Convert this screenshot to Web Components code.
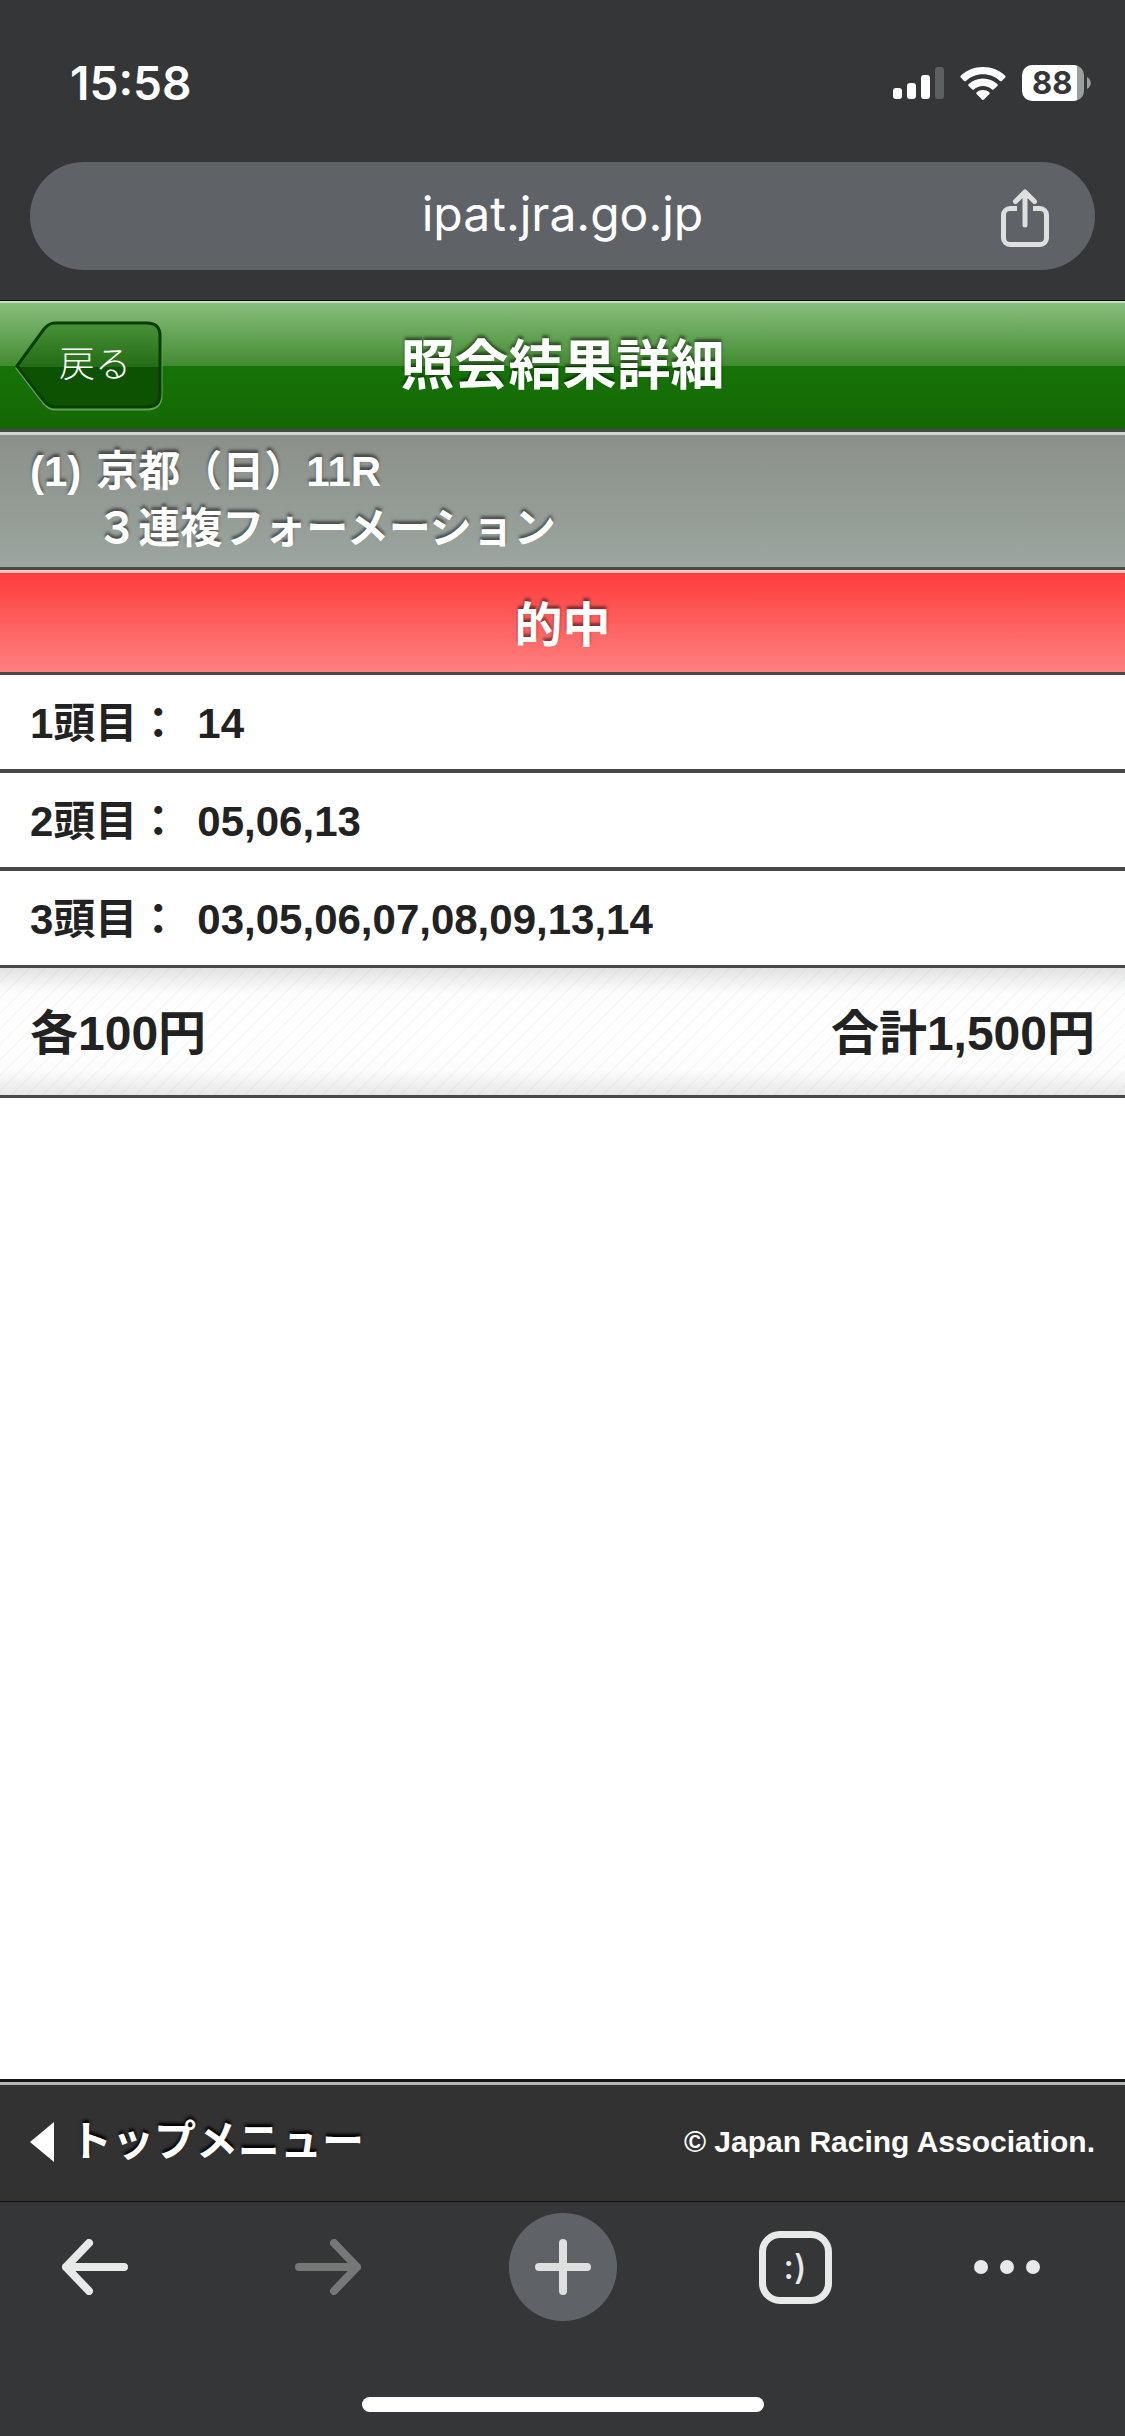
<!DOCTYPE html>
<html lang="ja">
<head>
<meta charset="utf-8">
<meta name="viewport" content="width=device-width, initial-scale=1">
<title>照会結果詳細</title>
<style>
    html, body { margin: 0; padding: 0; }
    body {
        display: flex; flex-direction: column; min-height: 100vh;
        background: #fff; color: #222;
        font-family: 'Liberation Sans', 'Noto Sans CJK JP', sans-serif;
        --chrome: #353638;
        --chrome-field: #5f6368;
        --chrome-icon: #e8eaea;
        --ui: 'Inter', sans-serif;
        --line: #484848;
        --shadow: 0 -3px 3px rgba(0, 0, 0, 0.5);
    }
    main { flex: 1; }
</style>
</head>
<body>
<status-bar time="15:58" battery="88"></status-bar>
<address-bar>ipat.jra.go.jp</address-bar>

<page-header back="戻る">照会結果詳細</page-header>
<main>
    <bet-title>
        <span slot="no">(1)</span>
        <span slot="race">京都（日）11R</span>
        <span slot="type">３連複フォーメーション</span>
    </bet-title>
    <bet-result>的中</bet-result>
    <horse-list></horse-list>
    <bet-total>
        <span slot="unit">各100円</span>
        <span slot="sum">合計1,500円</span>
    </bet-total>
</main>
<page-footer>
    <span slot="menu">トップメニュー</span>
    <span slot="copy">© Japan Racing Association.</span>
</page-footer>

<browser-toolbar></browser-toolbar>

<script>
class StatusBar extends HTMLElement {
    constructor() {
        super();
        this.attachShadow({ mode: 'open' });
    }

    connectedCallback() {
        this.shadowRoot.innerHTML = `
        <style>
            :host {
                display: flex; align-items: center; justify-content: space-between;
                padding: 53px 34px 49px 70px; background: var(--chrome); color: #fff;
                font-family: var(--ui); font-weight: 600;
            }
            .time { font-size: 46px; line-height: 60px; }
            .icons { display: flex; align-items: center; gap: 16px; }
            svg { display: block; }
            .battery { display: flex; align-items: center; gap: 3px; }
            .cell {
                width: 62px; height: 36px; border-radius: 10px;
                font-size: 31px; line-height: 36px; font-weight: 700; color: #353638;
                text-indent: 10px;
                background: linear-gradient(90deg, #fff 55px, #9a9f9e 55px);
            }
        </style>
        <span class="time">${this.getAttribute('time')}</span>
        <div class="icons">
            <svg width="51" height="32" viewBox="0 0 51 32" fill="#fff">
                <rect x="0" y="21" width="9" height="11" rx="3"/>
                <rect x="14" y="16" width="9" height="16" rx="3"/>
                <rect x="28" y="8" width="9" height="24" rx="3"/>
                <rect x="42" y="0" width="9" height="32" rx="3" fill="#5c6060"/>
            </svg>
            <svg width="46" height="33" viewBox="0 0 46 33" fill="#fff">
                <path d="M23 0C14.4 0 6.600 3.300.8 8.700c-.6.500-.6 1.400 0 1.900l3.300 3.300c.5.500 1.300.5 1.900 0C10.500 9.800 16.500 7.300 23 7.300s12.500 2.500 17 6.600c.6.500 1.400.5 1.900 0l3.300-3.300c.6-.5.600-1.400 0-1.900C39.400 3.300 31.600 0 23 0z"/>
                <path d="M23 11.500c-5.500 0-10.500 2.100-14.300 5.500-.6.500-.6 1.300-.1 1.900l3.500 3.400c.5.500 1.300.5 1.800.1 2.400-2.200 5.600-3.500 9.100-3.500s6.700 1.300 9.100 3.500c.5.400 1.300.4 1.800-.1l3.500-3.400c.5-.6.5-1.400-.1-1.900-3.800-3.400-8.800-5.500-14.300-5.500z"/>
                <path d="M23 23c-2.400 0-4.600.9-6.300 2.300-.6.500-.6 1.200-.1 1.700l5.400 5.500c.6.600 1.400.6 2 0l5.400-5.500c.5-.5.500-1.200-.1-1.700C27.600 23.900 25.400 23 23 23z"/>
            </svg>
            <div class="battery">
                <div class="cell">${this.getAttribute('battery')}</div>
                <svg width="4" height="12" viewBox="0 0 4 12"><path d="M0 0C5 3 5 9 0 12z" fill="#9a9f9e"/></svg>
            </div>
        </div>`;
    }
}
customElements.define('status-bar', StatusBar);

class AddressBar extends HTMLElement {
    constructor() {
        super();
        this.attachShadow({ mode: 'open' });
        this.shadowRoot.innerHTML = `
        <style>
            :host { display: block; padding: 0 30px 30px; background: var(--chrome); font-family: var(--ui); }
            .pill {
                display: grid; grid-template-columns: 1fr auto 1fr; align-items: center;
                min-height: 108px; border-radius: 54px; background: var(--chrome-field);
            }
            .url {
                grid-column: 2; border: none; padding: 0 0 4px; background: none; color: #fff;
                font: 400 48px/60px var(--ui);
            }
            .share { justify-self: end; margin-right: 46px; padding: 4px 0 0; border: none; background: none; }
            svg { display: block; }
        </style>
        <div class="pill">
            <button class="url"><slot></slot></button>
            <button class="share" aria-label="共有">
                <svg width="48" height="58" viewBox="0 0 48 58" fill="none" stroke="#dedfdf" stroke-width="5" stroke-linejoin="round">
                    <path d="M16 19.500H9A6.500 6.500 0 0 0 2.500 26v23A6.500 6.500 0 0 0 9 55.500h30a6.500 6.500 0 0 0 6.500-6.500V26a6.500 6.500 0 0 0-6.500-6.500h-7"/>
                    <path d="M24 36V3M14.500 12.500 24 3l9.500 9.500" stroke-linecap="round"/>
                </svg>
            </button>
        </div>`;
    }
}
customElements.define('address-bar', AddressBar);

class PageHeader extends HTMLElement {
    constructor() {
        super();
        this.attachShadow({ mode: 'open' });
    }

    connectedCallback() {
        this.shadowRoot.innerHTML = `
        <style>
            :host {
                display: grid; grid-template-columns: 1fr auto 1fr; align-items: center;
                min-height: 126px; padding: 2px 15px 0;
                border-top: 1px solid #111; border-bottom: 3px solid var(--line);
                box-shadow: inset 0 2px #c4dfbc;
                background: linear-gradient(#8cc07f, #418a30 51%, #167307 51%, #156805);
            }
            h1 {
                margin: 0; font-size: 54px; line-height: 66px; font-weight: 700; color: #fff;
                text-shadow: var(--shadow);
            }
            a {
                position: relative; justify-self: start; width: 148px; height: 90px;
                color: #fff; text-decoration: none; font-weight: 300;
                font-size: 36px; line-height: 88px; text-align: center;
            }
            a svg { position: absolute; left: 0; top: 0; }
            a span { position: relative; padding-left: 12px; }
        </style>
        <a href="#back">
            <svg width="148" height="90" viewBox="0 0 148 90">
                <defs>
                    <linearGradient id="g" x1="0" y1="0" x2="0" y2="1">
                        <stop offset="0" stop-color="#499238"/>
                        <stop offset=".52" stop-color="#246c15"/>
                        <stop offset=".52" stop-color="#0d5202"/>
                        <stop offset="1" stop-color="#0d5202"/>
                    </linearGradient>
                </defs>
                <path d="M2 47 29 9Q34 3 40 3H132Q146 3 146 17V74Q146 88 132 88H40Q34 88 29 82Z" fill="none" stroke="#62a552" stroke-width="3"/>
                <path d="M2 45 29 8Q34 2 40 2H132Q145 2 145 15V73Q145 86 132 86H40Q34 86 29 80Z" fill="url(#g)" stroke="#063f00" stroke-width="3"/>
            </svg>
            <span>${this.getAttribute('back')}</span>
        </a>
        <h1><slot></slot></h1>`;
    }
}
customElements.define('page-header', PageHeader);

class BetTitle extends HTMLElement {
    constructor() {
        super();
        this.attachShadow({ mode: 'open' });
        this.shadowRoot.innerHTML = `
        <style>
            :host {
                display: grid; grid-template-columns: auto 1fr; column-gap: 15px;
                padding: 11px 30px 10px;
                border-bottom: 3px solid var(--line); box-shadow: inset 0 3px #cfd3d1;
                background: linear-gradient(#8a8f89, #9ca59f);
                color: #fff; font-size: 42px; line-height: 57px; font-weight: 700;
                text-shadow: var(--shadow);
            }
            .type { grid-column: 2; }
        </style>
        <div><slot name="no"></slot></div>
        <div><slot name="race"></slot></div>
        <div class="type"><slot name="type"></slot></div>`;
    }
}
customElements.define('bet-title', BetTitle);

class BetResult extends HTMLElement {
    constructor() {
        super();
        this.attachShadow({ mode: 'open' });
        this.shadowRoot.innerHTML = `
        <style>
            :host {
                display: block; padding: 26px 30px 16px; text-align: center;
                border-bottom: 3px solid var(--line); box-shadow: inset 0 3px #ffc4c4;
                background: linear-gradient(#ff3a3a, #ff8080);
                color: #fff; font-size: 48px; line-height: 60px; font-weight: 700;
                text-shadow: var(--shadow);
            }
        </style>
        <slot></slot>`;
    }
}
customElements.define('bet-result', BetResult);

class HorseList extends HTMLElement {
    constructor() {
        super();
        this.attachShadow({ mode: 'open' });
        this.dados = [
            { label: "1頭目：", nums: ["14"] },
            { label: "2頭目：", nums: ["05", "06", "13"] },
            { label: "3頭目：", nums: ["03", "05", "06", "07", "08", "09", "13", "14"] }
        ];
    }

    connectedCallback() { this.render(); }

    render() {
        this.shadowRoot.innerHTML = `
        <style>
            :host { display: block; font-size: 42px; line-height: 60px; font-weight: 700; }
            dl { margin: 0; }
            .row {
                display: flex; gap: 18px; padding: 19px 30px 15px;
                border-bottom: 4px solid var(--line);
            }
            .row:last-child { border-bottom-width: 3px; }
            dd { margin: 0; }
        </style>
        <dl>
            ${this.dados.map(item => `
                <div class="row"><dt>${item.label}</dt><dd>${item.nums.join(',')}</dd></div>
            `).join('')}
        </dl>`;
    }
}
customElements.define('horse-list', HorseList);

class BetTotal extends HTMLElement {
    constructor() {
        super();
        this.attachShadow({ mode: 'open' });
        this.shadowRoot.innerHTML = `
        <style>
            :host {
                display: flex; justify-content: space-between; padding: 36px 30px 31px;
                border-bottom: 3px solid var(--line);
                font-size: 48px; line-height: 60px; font-weight: 700;
                background:
                    repeating-linear-gradient(135deg, transparent 0 9px, rgba(0, 0, 0, 0.04) 10px, transparent 11px),
                    linear-gradient(#e2e4e3, #fdfdfd 20%, #fff 50%, #fdfdfd 80%, #e6e7e6);
            }
        </style>
        <slot name="unit"></slot>
        <slot name="sum"></slot>`;
    }
}
customElements.define('bet-total', BetTotal);

class PageFooter extends HTMLElement {
    constructor() {
        super();
        this.attachShadow({ mode: 'open' });
        this.shadowRoot.innerHTML = `
        <style>
            :host {
                display: flex; align-items: center; justify-content: space-between;
                min-height: 119px; padding: 0 30px;
                border-top: 3px solid #151515; border-bottom: 1px solid #111;
                box-shadow: inset 0 3px #b0b7b3;
                background: #323232; color: #fff; font-weight: 700;
            }
            a {
                display: flex; align-items: center; gap: 16px; color: inherit; text-decoration: none;
                font-size: 42px; line-height: 60px; text-shadow: 0 -3px 3px #000;
            }
            small { font-size: 30px; line-height: 36px; }
        </style>
        <a href="#top">
            <svg width="24" height="40" viewBox="0 0 24 40"><path d="M24 0V40L0 20z" fill="#fff"/></svg>
            <slot name="menu"></slot>
        </a>
        <small><slot name="copy"></slot></small>`;
    }
}
customElements.define('page-footer', PageFooter);

class BrowserToolbar extends HTMLElement {
    constructor() {
        super();
        this.attachShadow({ mode: 'open' });
        this.shadowRoot.innerHTML = `
        <style>
            :host { display: block; padding: 11px 0 24px; background: var(--chrome); }
            nav {
                display: grid; grid-template-columns: 190fr 276fr 194fr 270fr 154fr;
                align-items: center; justify-items: center; padding-right: 41px;
            }
            button { display: block; margin: 0; padding: 0; border: none; background: none; color: var(--chrome-icon); }
            button:disabled { color: #767877; }
            svg { display: block; fill: none; stroke: currentColor; stroke-width: 8px; stroke-linecap: round; stroke-linejoin: round; }
            .new { display: grid; place-items: center; width: 108px; height: 108px; border-radius: 50%; background: var(--chrome-field); color: #dedfdf; }
            .tabs {
                box-sizing: border-box; width: 73px; height: 73px; border: 7px solid currentColor; border-radius: 21px;
                font: 500 34px/50px var(--ui);
            }
            .more svg { fill: currentColor; stroke: none; }
            .home { width: 402px; height: 15px; margin: 76px auto 0; border-radius: 8px; background: #fff; }
        </style>
        <nav>
            <button aria-label="戻る"><svg width="66" height="56" viewBox="0 0 66 56"><path d="M62 28H4M27 4 4 28l23 24"/></svg></button>
            <button aria-label="進む" disabled><svg width="66" height="56" viewBox="0 0 66 56"><path d="M4 28H62M39 4 62 28 39 52"/></svg></button>
            <button class="new" aria-label="新しいタブ"><svg width="56" height="56" viewBox="0 0 56 56"><path d="M28 4V52M4 28H52"/></svg></button>
            <button class="tabs">:)</button>
            <button class="more" aria-label="メニュー"><svg width="66" height="14" viewBox="0 0 66 14"><circle cx="7" cy="7" r="7"/><circle cx="33" cy="7" r="7"/><circle cx="59" cy="7" r="7"/></svg></button>
        </nav>
        <div class="home"></div>`;
    }
}
customElements.define('browser-toolbar', BrowserToolbar);
</script>
</body>
</html>
